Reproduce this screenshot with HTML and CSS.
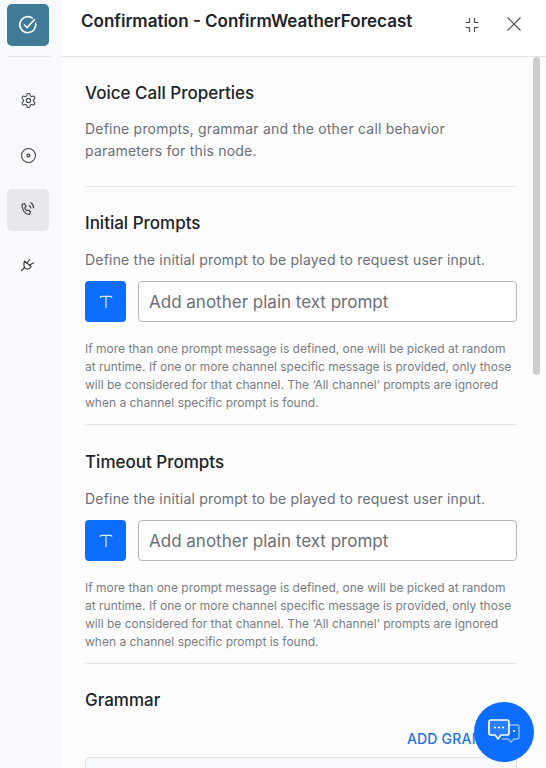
FILE: index.html
```html
<!DOCTYPE html>
<html lang="en">
<head>
    <meta charset="UTF-8">
    <title>Confirmation - ConfirmWeatherForecast</title>
    <link rel="stylesheet" href="styles.css">
</head>
<body>
    <div class="panel">
        <nav class="sidebar">
            <div class="node-badge">
                <svg width="22" height="22" viewBox="0 0 22 22" fill="none" stroke="#fff" stroke-width="1.5"><path d="M18.5 8.500a8 8 0 1 1-2.600-4"/><path d="M7.500 11l2.600 2.600 7.400-8" stroke-linecap="round"/></svg>
            </div>
            <div class="side-rule"></div>
            <div class="side-item">
                <svg width="17" height="17" viewBox="0 0 24 24" fill="none" stroke="#3c4148" stroke-width="1.500" stroke-linecap="round" stroke-linejoin="round"><path d="M12.220 2h-.44a2 2 0 0 0-2 2v.18a2 2 0 0 1-1 1.730l-.43.25a2 2 0 0 1-2 0l-.15-.08a2 2 0 0 0-2.730.73l-.22.38a2 2 0 0 0 .73 2.730l.15.1a2 2 0 0 1 1 1.720v.51a2 2 0 0 1-1 1.740l-.15.09a2 2 0 0 0-.73 2.730l.22.38a2 2 0 0 0 2.730.73l.15-.08a2 2 0 0 1 2 0l.43.25a2 2 0 0 1 1 1.730V20a2 2 0 0 0 2 2h.44a2 2 0 0 0 2-2v-.18a2 2 0 0 1 1-1.730l.43-.25a2 2 0 0 1 2 0l.15.08a2 2 0 0 0 2.730-.73l.22-.39a2 2 0 0 0-.73-2.730l-.15-.08a2 2 0 0 1-1-1.740v-.5a2 2 0 0 1 1-1.740l.15-.09a2 2 0 0 0 .73-2.730l-.22-.38a2 2 0 0 0-2.730-.73l-.15.08a2 2 0 0 1-2 0l-.43-.25a2 2 0 0 1-1-1.730V4a2 2 0 0 0-2-2z"/><circle cx="12" cy="12" r="3"/></svg>
            </div>
            <div class="side-item">
                <svg width="17" height="17" viewBox="0 0 18 18" fill="none" stroke="#3c4148" stroke-width="1.100"><circle cx="9" cy="9" r="7.400"/><circle cx="9" cy="9" r="1.500" stroke-width="1.300"/></svg>
            </div>
            <div class="side-item side-item-active">
                <svg width="16" height="16" viewBox="0 0 16 16" fill="none" stroke="#3c4148" stroke-width="1.200" stroke-linecap="round" stroke-linejoin="round"><path d="M2 2.500 4.500 1.500 6 4.500 4.800 5.800c.3 1.300 1 2.200 2.200 2.900L8.500 8l2 2-1.300 2.500C5 12.800 1.800 7.500 2 2.500z"/><path d="M9 3.500c1.200.5 1.800 1.300 1.800 2.500"/><path d="M10.800.8c1.800 1 2.800 2.600 2.700 5"/></svg>
            </div>
            <div class="side-item">
                <svg width="18" height="18" viewBox="0 0 18 18" fill="none" stroke="#3c4148" stroke-width="1.200" stroke-linecap="round" stroke-linejoin="round"><path d="M5.500 5 12 10.500c-1 2-3.400 3.200-5.200 2.200S4.200 8 5.500 5z"/><path d="M8 7l2.500-3.500M10.500 9l4-2"/><path d="M5.500 11.500 2.500 14.500"/></svg>
            </div>
        </nav>

        <div class="main">
            <header class="topbar">
                <h1>Confirmation - ConfirmWeatherForecast</h1>
                <div class="top-actions">
                    <svg width="16" height="16" viewBox="0 0 16 16" fill="none" stroke="#4a4f57" stroke-width="1.200"><path d="M5.500 1v4.500H1.500M10.500 1v4.500H14.500M5.500 15v-4.500H1.500M10.500 15v-4.500H14.500"/></svg>
                    <svg width="16" height="16" viewBox="0 0 16 16" fill="none" stroke="#4a4f57" stroke-width="1.200"><path d="M1.500.5l13 13M14.500.5l-13 13"/></svg>
                </div>
            </header>

            <div class="content">
                <section class="block">
                    <h2>Voice Call Properties</h2>
                    <p class="lead">Define prompts, grammar and the other call behavior parameters for this node.</p>
                </section>

                <section class="block">
                    <h2>Initial Prompts</h2>
                    <p class="lead">Define the initial prompt to be played to request user input.</p>
                    <div class="prompt-row">
                        <button class="text-btn">
                            <svg width="16" height="16" viewBox="0 0 14 14" fill="none" stroke="#dce9ff" stroke-width="1.100" stroke-linecap="round"><path d="M2 3c0-.6.4-1 1-1h8c.6 0 1 .4 1 1M7 2v10"/></svg>
                        </button>
                        <div class="prompt-input">Add another plain text prompt</div>
                    </div>
                    <p class="hint">If more than one prompt message is defined, one will be picked at random at runtime. If one or more channel specific message is provided, only those will be considered for that channel. The ‘All channel’ prompts are ignored when a channel specific prompt is found.</p>
                </section>

                <section class="block">
                    <h2>Timeout Prompts</h2>
                    <p class="lead">Define the initial prompt to be played to request user input.</p>
                    <div class="prompt-row">
                        <button class="text-btn">
                            <svg width="16" height="16" viewBox="0 0 14 14" fill="none" stroke="#dce9ff" stroke-width="1.100" stroke-linecap="round"><path d="M2 3c0-.6.4-1 1-1h8c.6 0 1 .4 1 1M7 2v10"/></svg>
                        </button>
                        <div class="prompt-input">Add another plain text prompt</div>
                    </div>
                    <p class="hint">If more than one prompt message is defined, one will be picked at random at runtime. If one or more channel specific message is provided, only those will be considered for that channel. The ‘All channel’ prompts are ignored when a channel specific prompt is found.</p>
                </section>

                <section class="block grammar">
                    <h2>Grammar</h2>
                    <div class="add-row"><a class="add-link">ADD GRAMMAR</a></div>
                    <div class="grammar-box"></div>
                </section>
            </div>
            <div class="scroll-thumb"></div>
        </div>

        <button class="chat-fab">
            <svg width="34" height="28" viewBox="0 0 34 28" fill="none" stroke-linejoin="round">
                <path d="M18 7h12a2 2 0 0 1 2 2v10a2 2 0 0 1-2 2h-3l-3 3-3-3h-6" stroke="#8fbcfb" stroke-width="1.500"/>
                <path d="M4 2h16a2 2 0 0 1 2 2v11a2 2 0 0 1-2 2h-6l-3 4-3-4H4a2 2 0 0 1-2-2V4a2 2 0 0 1 2-2z" fill="#2a7ffd" stroke="#fff" stroke-width="1.700"/>
                <circle cx="8" cy="9.500" r="1.100" fill="#fff"/><circle cx="12" cy="9.500" r="1.100" fill="#fff"/><circle cx="16" cy="9.500" r="1.100" fill="#fff"/>
                <circle cx="27" cy="13" r="1.100" fill="#fff"/>
            </svg>
        </button>
    </div>
</body>
</html>
```

FILE: styles.css
```css
* {
    box-sizing: border-box;
    margin: 0;
    padding: 0;
}

html,
body {
    height: 100%;
    overflow: hidden;
}

body {
    font-family: Inter, "Noto Sans", sans-serif;
    background-color: #fff;
    color: #202329;
}

.panel {
    display: flex;
    height: 768px;
    overflow: hidden;
    position: relative;
}

/* left rail */
.sidebar {
    width: 61px;
    flex-shrink: 0;
    background-color: #f7f9fc;
    padding: 4px 0 0 7px;
}

.node-badge {
    width: 42px;
    height: 42px;
    border-radius: 5px;
    background-color: #3f7a96;
    display: flex;
    align-items: center;
    justify-content: center;
}

.side-rule {
    width: 44px;
    margin: 10px 0 22px;
    border-top: 1px solid #e4e6ea;
}

.side-item {
    width: 42px;
    height: 42px;
    margin-bottom: 13px;
    border-radius: 5px;
    display: flex;
    align-items: center;
    justify-content: center;
}

.side-item-active {
    background-color: #e6e8ec;
}

/* main column */
.main {
    flex: 1;
    min-width: 0;
    position: relative;
    background-color: #fdfdfd;
}

.topbar {
    height: 57px;
    display: flex;
    align-items: flex-start;
    justify-content: space-between;
    padding: 11px 24px 0 20px;
    background-color: #fff;
    border-bottom: 1px solid #e4e6ea;
}

.topbar h1 {
    font-size: 17px;
    line-height: 20px;
    font-weight: 600;
    color: #202329;
}

.top-actions {
    display: flex;
    gap: 26px;
    padding-top: 6px;
}

.content {
    padding: 26px 29px 0 24px;
}

.block {
    padding-bottom: 12px;
    margin-bottom: 26px;
    border-bottom: 1px solid #e4e6ea;
}

.block:nth-child(2) {
    margin-bottom: 27px;
}

.block h2 {
    font-size: 17px;
    line-height: 20px;
    font-weight: 500;
    color: #202329;
    margin-bottom: 16px;
}

.block:first-child h2 {
    margin-bottom: 15px;
}

.lead {
    font-size: 14px;
    line-height: 22px;
    letter-spacing: 0.2px;
    color: #6a6f78;
}

.block:first-child {
    padding-bottom: 24px;
}

.prompt-row {
    display: flex;
    gap: 12px;
    margin-top: 10px;
}

.text-btn {
    width: 41px;
    height: 41px;
    flex-shrink: 0;
    border: none;
    border-radius: 4px;
    background-color: #0d6efd;
    display: flex;
    align-items: center;
    justify-content: center;
}

.prompt-input {
    flex: 1;
    height: 41px;
    border: 1px solid #b5b8bf;
    border-radius: 4px;
    background-color: #fff;
    padding: 0 10px;
    font-size: 17px;
    line-height: 41px;
    color: #6a6f78;
}

.hint {
    margin-top: 18px;
    font-size: 12px;
    line-height: 18px;
    color: #787d85;
}

.grammar {
    border-bottom: none;
}

.add-row {
    text-align: right;
    margin-top: 18px;
}

.add-link {
    font-size: 14px;
    line-height: 20px;
    font-weight: 500;
    letter-spacing: 0.2px;
    color: #1a73e8;
}

.grammar-box {
    height: 60px;
    margin-top: 8px;
    background-color: #f7f9fc;
    border: 1px solid #e0e2e6;
    border-radius: 4px;
}

.scroll-thumb {
    position: absolute;
    top: 57px;
    right: 6px;
    width: 7px;
    height: 318px;
    border-radius: 4px;
    background-color: #cdcdcd;
}

.chat-fab {
    position: absolute;
    left: 474px;
    top: 702px;
    width: 60px;
    height: 60px;
    border: none;
    border-radius: 50%;
    background-color: #0d6efd;
    display: flex;
    align-items: center;
    justify-content: center;
}
```
